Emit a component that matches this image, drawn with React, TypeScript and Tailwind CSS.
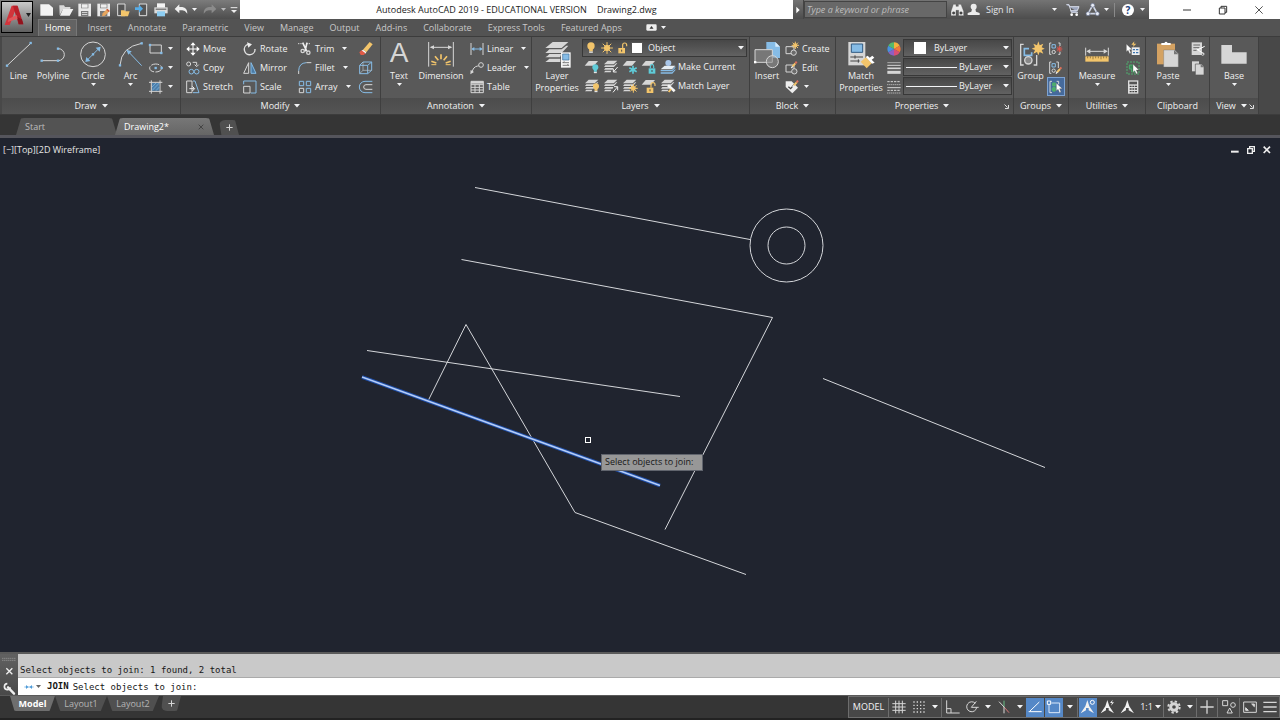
import { useState } from "react";
import type { ReactNode } from "react";

const BLUE = "#86bce6";
const LIGHT = "#d6d6d6";
const GOLD = "#f3c56b";
const TEAL = "#5fcbd8";
const GREEN = "#4fae6e";

/* icons are drawn on a grid of 3 units per pixel */
function Ico({ w = 16, h = 16, children }: { w?: number; h?: number; children: ReactNode }) {
  return (
    <svg
      width={w}
      height={h}
      viewBox={`0 0 ${w * 3} ${h * 3}`}
      fill="none"
      stroke={LIGHT}
      strokeWidth={3}
      className="block shrink-0"
      aria-hidden="true"
    >
      {children}
    </svg>
  );
}

function Caret({ small }: { small?: boolean }) {
  return small ? (
    <svg width="5" height="3" viewBox="0 0 5 3" className="block shrink-0 fill-gray-100" aria-hidden="true">
      <path d="M0 0h5L2.500 3z" />
    </svg>
  ) : (
    <svg width="6" height="4" viewBox="0 0 6 4" className="block shrink-0 fill-gray-100" aria-hidden="true">
      <path d="M0 0h6L3 3.600z" />
    </svg>
  );
}

/* small blue grip square */
function Grip({ x, y }: { x: number; y: number }) {
  return <rect x={x - 3.5} y={y - 3.5} width="7" height="7" fill={BLUE} stroke="none" />;
}

function Sheets() {
  return (
    <g stroke="none" fill={LIGHT}>
      <path d="M14 5h29l-11 11H3z" />
      <path d="M7 19h26l6-6h4L33 24H3zM7 27h24l-2 5H3zM7 35h18l-2 5H3z" />
    </g>
  );
}

function Sheet() {
  return <path d="M14 6h28L30 20H2z" fill={LIGHT} stroke="none" />;
}

const Sun = ({ x, y, r = 6 }: { x: number; y: number; r?: number }) => (
  <g stroke={GOLD} strokeWidth="3">
    <circle cx={x} cy={y} r={r} fill={GOLD} />
    <path
      d={`M${x} ${y - r * 2.2}v${r * 4.4}M${x - r * 2.2} ${y}h${r * 4.4}M${x - r * 1.6} ${y - r * 1.6}l${r * 3.2} ${r * 3.2}M${x + r * 1.6} ${y - r * 1.6}l${-r * 3.2} ${r * 3.2}`}
    />
  </g>
);

const Bulb = ({ x, y, c = GOLD, r = 9 }: { x: number; y: number; c?: string; r?: number }) => (
  <g stroke="none">
    <circle cx={x} cy={y} r={r} fill={c} />
    <path d={`M${x - r / 2} ${y + r / 2}h${r}v${r}h${-r}z`} fill={c} />
    <path d={`M${x - r / 2} ${y + r * 1.5}h${r}v4h${-r}z`} fill="#e6e6e6" />
  </g>
);

const Lock = ({ x, y, c = GOLD, open }: { x: number; y: number; c?: string; open?: boolean }) => (
  <g stroke={c}>
    <path
      d={open ? `M${x + 13} ${y}v-9q0-6 6-6t6 6v4` : `M${x + 5} ${y}v-6q0-6 5-6t5 6v6`}
      strokeWidth="3.500"
    />
    <rect x={x} y={y} width="20" height="16" fill={c} stroke="none" />
    <path d={`M${x + 10} ${y + 5}v6`} stroke="#4a4a4a" />
  </g>
);

const Pencil = ({ x, y }: { x: number; y: number }) => (
  <g strokeWidth="6">
    <path d={`M${x + 3} ${y + 15}l9-10`} stroke={GOLD} />
    <path d={`M${x + 12} ${y + 5}l4-5`} stroke="#e0705a" />
    <path d={`M${x} ${y + 19}l4-5`} stroke="#f2f2f2" strokeWidth="4" />
  </g>
);

const Cursor = ({ x, y }: { x: number; y: number }) => (
  <path d={`M${x} ${y}v24l5-5 5 10 4-2-4-10h8z`} fill="#fff" stroke="#444" strokeWidth="1" />
);

const Person = () => (
  <g fill="#ececec" stroke="none">
    <circle cx="23" cy="14" r="9" />
    <path d="M18 21h10l2 8 11 4v6H5v-6l11-4z" />
  </g>
);

interface BigButtonProps {
  label: string;
  icon: ReactNode;
  width: string;
  caret?: boolean;
}

function BigButton({ label, icon, width, caret }: BigButtonProps) {
  return (
    <button className={`flex shrink-0 flex-col items-center pt-1 hover:bg-white/10 ${width}`}>
      <span className="flex h-7 items-start justify-center">{icon}</span>
      <span className="mt-px text-center leading-3">{label}</span>
      {caret && (
        <span className="mt-px">
          <Caret small />
        </span>
      )}
    </button>
  );
}

interface RowButtonProps {
  label?: string;
  name?: string;
  icon: ReactNode;
  caret?: boolean;
  active?: boolean;
}

function RowButton({ label, name, icon, caret, active }: RowButtonProps) {
  return (
    <button
      aria-label={label ? undefined : name}
      className={`flex h-[19px] items-center gap-0.5 whitespace-nowrap ${
        active ? "bg-[#456a9c] outline outline-[#7ea3d2] -outline-offset-1" : "hover:bg-white/10"
      }`}
    >
      {icon}
      {label && <span>{label}</span>}
      {caret && (
        <span className={label ? "ml-1.5" : "ml-0.5"}>
          <Caret small />
        </span>
      )}
    </button>
  );
}

interface PanelProps {
  title: string;
  width: string;
  caret?: boolean;
  launcher?: boolean;
  children: ReactNode;
}

function Panel({ title, width, caret = true, launcher, children }: PanelProps) {
  return (
    <section
      aria-label={title}
      className={`flex shrink-0 flex-col border-r border-[#3f3f3f] shadow-[inset_-1px_0_0_#666] ${width}`}
    >
      <div className="flex h-[62px] bg-[#595959]">{children}</div>
      <div className="flex h-4 items-center bg-linear-to-b from-[#4c4c4c] to-[#545454] px-1">
        <button className="flex flex-1 items-center justify-center gap-[5px] leading-3">
          {title}
          {caret && <Caret />}
        </button>
        {launcher && (
          <button aria-label={`${title} settings`}>
            <svg width="5" height="5" viewBox="0 0 5 5" stroke="#ddd" fill="none" className="block">
              <path d="M0.500 0.500l3 3M4.500 1v3.500H1" />
            </svg>
          </button>
        )}
      </div>
    </section>
  );
}

function Rows({ className = "", children }: { className?: string; children: ReactNode }) {
  return <div className={`flex flex-col items-start pt-0.5 ${className}`}>{children}</div>;
}

function Combo({ name, value, lead }: { name: string; value: string; lead: ReactNode }) {
  return (
    <label className="flex h-[18px] w-full items-center border border-[#383838] bg-linear-to-b from-[#474747] to-[#626262] pr-0.5">
      {lead}
      <select
        aria-label={name}
        defaultValue={value}
        className="min-w-0 flex-1 cursor-pointer appearance-none bg-transparent leading-3 outline-none"
      >
        <option>{value}</option>
      </select>
      <Caret />
    </label>
  );
}

const tabs = [
  "Insert",
  "Annotate",
  "Parametric",
  "View",
  "Manage",
  "Output",
  "Add-ins",
  "Collaborate",
  "Express Tools",
  "Featured Apps",
];

const quickAccess = [
  {
    name: "New",
    icon: <path d="M4 7h26l12 10v24H4z" fill="#f4f4f4" stroke="none" />,
  },
  {
    name: "Open",
    icon: (
      <g stroke="none">
        <path d="M4 10h14l3 5h16v8H14L5 40z" fill="#d9d9d9" />
        <path d="M15 21h31L35 41H6z" fill="#f1f1f1" />
      </g>
    ),
  },
  {
    name: "Save",
    icon: (
      <g stroke="none">
        <path d="M4 5h38v38H4z" fill="#e9e9e9" />
        <path d="M12 5h22v14H12zM12 27h22v16H12z" fill="#777" />
        <path d="M14 7h18v10H14zM15 31h16v2H15zM15 37h16v2H15z" fill="#eee" />
      </g>
    ),
  },
  {
    name: "Save As",
    icon: (
      <g stroke="none">
        <path d="M4 5h38v38H4z" fill="#e9e9e9" />
        <path d="M12 5h22v14H12zM12 27h22v16H12z" fill="#777" />
        <path d="M14 7h18v10H14z" fill="#eee" />
        <path d="M18 43l2-9 14-14 7 7-14 14z" fill="#e6a55d" />
        <path d="M31 23l3-3 7 7-3 3z" fill="#c8563d" />
      </g>
    ),
  },
  {
    name: "Open from Web and Mobile",
    icon: (
      <g>
        <path d="M8 6h22v35H8z" fill="#555" stroke="#ddd" />
        <path d="M18 25h10l3 3h13l-5 15H18z" fill={GOLD} stroke="none" />
      </g>
    ),
  },
  {
    name: "Save to Web and Mobile",
    icon: (
      <g>
        <path d="M16 6h22v35H16z" fill="#555" stroke="#ddd" />
        <path d="M3 16h12V8l12 12-12 12v-8H3z" fill="#57ade8" stroke="none" />
      </g>
    ),
  },
  {
    name: "Plot",
    icon: (
      <g stroke="none">
        <path d="M12 4h24v13H12z" fill="#f4f4f4" />
        <path d="M4 16h40v18H4z" fill="#dcdcdc" />
        <path d="M12 28h24v15H12z" fill="#8dcdf2" />
        <path d="M8 20h32v3H8z" fill="#555" />
      </g>
    ),
  },
];

const modifyTools: { name: string; icon: ReactNode; caret?: boolean; bare?: boolean }[] = [
  {
    name: "Move",
    icon: (
      <g>
        <path d="M24 8v32M8 24h32" stroke="#fff" />
        <path d="M24 4l8 9H16zM24 44l8-9H16zM4 24l9-8v16zM44 24l-9-8v16z" fill="#fff" stroke="none" />
      </g>
    ),
  },
  {
    name: "Rotate",
    icon: (
      <g>
        <path d="M18 10a16 16 0 1 0 21 14" stroke="#e2e2e2" strokeWidth="4" />
        <path d="M15 4l15 6-11 10z" fill="#eee" stroke="none" />
      </g>
    ),
  },
  {
    name: "Trim",
    caret: true,
    icon: (
      <g>
        <path d="M3 8h13" strokeDasharray="4 3" />
        <path d="M28 8h14" strokeDasharray="4 3" />
        <path d="M17 5l12 25M30 5l-6 26" stroke="#eee" strokeWidth="5" />
        <circle cx="17" cy="30" r="5" strokeWidth="4" />
        <circle cx="34" cy="35" r="5" strokeWidth="4" />
      </g>
    ),
  },
  {
    name: "Erase",
    bare: true,
    icon: (
      <g stroke="none">
        <path d="M15 26L35 3l9 7-19 24z" fill={GOLD} />
        <path d="M15 26l10 8-4 5-11-9z" fill="#fff" />
        <path d="M4 34l6-6 13 9-6 5H8z" fill="#e05b47" />
      </g>
    ),
  },
  {
    name: "Copy",
    icon: (
      <g>
        <circle cx="11" cy="12" r="6" />
        <path d="M23 7h12v9M29 14l6 6 6-6" />
        <circle cx="19" cy="35" r="7" stroke={BLUE} />
        <circle cx="35" cy="35" r="7" stroke={BLUE} />
      </g>
    ),
  },
  {
    name: "Mirror",
    icon: (
      <g>
        <path d="M20 8v32H5z" />
        <path d="M27 8v32h15z" stroke={BLUE} fill="#4b7ba5" />
      </g>
    ),
  },
  {
    name: "Fillet",
    caret: true,
    icon: (
      <g>
        <path d="M28 8h15M5 32v10" />
        <path d="M5 32Q6 9 28 8" stroke={BLUE} />
      </g>
    ),
  },
  {
    name: "Explode",
    bare: true,
    icon: (
      <g>
        <path d="M5 16h24v25H5zM15 6h26v25L29 41M5 16L15 6M29 16l12-10" stroke={BLUE} />
        <path d="M15 6v25h26M5 41l10-10" stroke="#b9c5cf" strokeWidth="2" />
      </g>
    ),
  },
  {
    name: "Stretch",
    icon: (
      <g>
        <path d="M21 6H5v35h16z" />
        <path d="M24 6h6l12 35H24" stroke={BLUE} />
        <path d="M13 29h14M22 22l7 7-7 7" stroke="#eee" />
      </g>
    ),
  },
  {
    name: "Scale",
    icon: (
      <g>
        <path d="M5 16V6h37v36H26" stroke={BLUE} />
        <path d="M5 22h19v20H5z" />
      </g>
    ),
  },
  {
    name: "Array",
    caret: true,
    icon: (
      <g>
        <path d="M7 7h13v13H7zM28 7h13v13H28z" stroke={BLUE} />
        <path d="M7 28h13v13H7z" />
        <path d="M28 28h13v13H28z" stroke={BLUE} />
      </g>
    ),
  },
  {
    name: "Offset",
    bare: true,
    icon: (
      <g>
        <path d="M43 7H21a16.500 16.500 0 0 0 0 34h22" stroke={BLUE} />
        <path d="M43 17H24a7 7 0 0 0 0 14h19" />
      </g>
    ),
  },
];

const layerTools: { name: string; icon: ReactNode }[][] = [
  [
    { name: "Off", icon: <><Sheet /><Bulb x={34} y={25} c={TEAL} /></> },
    { name: "Isolate", icon: <><Sheets /><path d="M44 24L31 39M31 29v10h10" stroke="#eee" /></> },
    {
      name: "Freeze",
      icon: (
        <>
          <Sheet />
          <path d="M33 20v24M22 26l22 12M44 26L22 38" stroke={TEAL} strokeWidth="5" />
        </>
      ),
    },
    { name: "Lock", icon: <><Sheet /><Lock x={23} y={28} c={TEAL} /></> },
  ],
  [
    { name: "Turn All Layers On", icon: <><Sheets /><Bulb x={36} y={25} /></> },
    { name: "Unisolate", icon: <><Sheets /><path d="M30 43L43 27M33 26h11v11" stroke="#eee" /></> },
    { name: "Thaw All Layers", icon: <><Sheets /><Sun x={34} y={31} /></> },
    { name: "Unlock", icon: <><Sheet /><Lock x={17} y={29} open /></> },
  ],
];

/* segments of the model, in canvas pixels */
const polylines = [
  "475,49.500 750,101.500",
  "461.500,121.500 772.500,179.500 665,391.500",
  "428,263 466,186.500 575,374.500 746,436.500",
  "367,212.500 680,258.500",
  "823,240.500 1045,329.500",
];

const statusButton = "flex h-[19px] shrink-0 items-center justify-center";

function TitleBar() {
  return (
    <header className="flex h-[19px] bg-white text-[#222]">
      <div className="flex items-center bg-linear-to-b from-[#7c7c7c] to-[#4d4d4d] pl-[39px] pr-0.5">
        {quickAccess.map((q) => (
          <button key={q.name} aria-label={q.name} className="mr-[3px]">
            <Ico>{q.icon}</Ico>
          </button>
        ))}
        <button aria-label="Undo" className="ml-0.5">
          <Ico w={14}>
            <path d="M16 7v8h9q15 2 15 20-7-10-15-10h-9v9L2 21z" fill="#eee" stroke="none" />
          </Ico>
        </button>
        <button aria-label="Undo history" className="mx-1">
          <Caret small />
        </button>
        <button aria-label="Redo" className="ml-0.5">
          <Ico w={14}>
            <path d="M26 7v8h-9Q2 17 2 35q7-10 15-10h9v9l14-13z" fill="#8b8b8b" stroke="none" />
          </Ico>
        </button>
        <button aria-label="Redo history" className="mx-1 opacity-60">
          <Caret small />
        </button>
        <button aria-label="Customize Quick Access Toolbar">
          <Ico w={8} h={8}>
            <path d="M2 5h20" stroke="#eee" />
            <path d="M3 12h18l-9 9z" fill="#eee" stroke="none" />
          </Ico>
        </button>
      </div>
      <h1 className="flex flex-1 items-center justify-center gap-2.5 whitespace-nowrap text-[9px]">
        <span>Autodesk AutoCAD 2019 - EDUCATIONAL VERSION</span>
        <span>Drawing2.dwg</span>
      </h1>
      <div className="flex items-center bg-linear-to-b from-[#747474] to-[#4d4d4d] text-gray-200">
        <button aria-label="Collapse search" className="flex h-full w-[11px] items-center justify-center border-r border-[#444]">
          <Ico w={4} h={8}>
            <path d="M1 2l10 10L1 22z" fill="#fff" stroke="none" />
          </Ico>
        </button>
        <input
          aria-label="Search"
          placeholder="Type a keyword or phrase"
          className="h-[17px] w-[143px] border border-[#444] bg-[#686868] px-0.5 text-[9px] italic outline-none placeholder:text-[#bdbdbd]"
        />
        <button aria-label="Find" className="ml-0.5">
          <Ico w={17}>
            <g fill="#ececec" stroke="#444" strokeWidth="1">
              <path d="M13 7h8v6h7V7h8l8 21v13H29V25h-8v16H6V28z" />
              <circle cx="14" cy="33" r="4" fill="#444" />
              <circle cx="36" cy="33" r="4" fill="#444" />
            </g>
          </Ico>
        </button>
        <button className="flex items-center gap-1">
          <Ico>
            <Person />
          </Ico>
          Sign In
        </button>
        <button aria-label="Account menu" className="ml-[38px] mr-2">
          <Caret small />
        </button>
        <button aria-label="App Store">
          <Ico>
            <path d="M4 8h8l7 23h20M14 14h28l-5 12H17" stroke="#d7dcea" fill="#9da6bd" />
            <circle cx="20" cy="38" r="4" fill="#fff" stroke="none" />
            <circle cx="35" cy="38" r="4" fill="#fff" stroke="none" />
          </Ico>
        </button>
        <button aria-label="Stay Connected" className="ml-1 flex items-center gap-[3px]">
          <Ico>
            <path d="M23 10L9 35h28z" stroke="#cfd6e6" strokeWidth="5" />
            <g fill="#e8ecf5" stroke="#5f6987" strokeWidth="2">
              <circle cx="23" cy="10" r="6" />
              <circle cx="9" cy="35" r="6" />
              <circle cx="37" cy="35" r="6" />
            </g>
          </Ico>
          <Caret small />
        </button>
        <span className="mx-[5px] h-3.5 w-px bg-[#8a8a8a]" />
        <button aria-label="Help" className="mx-0.5 flex size-3 items-center justify-center rounded-full bg-white text-[10px] font-bold leading-3 text-[#22407a]">
          ?
        </button>
        <button aria-label="Help menu" className="mx-1">
          <Caret small />
        </button>
      </div>
      <div className="flex w-[131px] items-center justify-between pl-[33px] pr-4">
        <button aria-label="Minimize">
          <Ico w={10} h={10}>
            <path d="M3 15h24" stroke="#333" />
          </Ico>
        </button>
        <button aria-label="Restore">
          <Ico w={10} h={10}>
            <path d="M4 9h17v18H4zM9 9V4h17v18h-5" stroke="#333" />
          </Ico>
        </button>
        <button aria-label="Close">
          <Ico w={10} h={10}>
            <path d="M4 4l22 22M26 4L4 26" stroke="#333" strokeWidth="2.500" />
          </Ico>
        </button>
      </div>
    </header>
  );
}

function Ribbon() {
  return (
    <div className="flex h-[79px] overflow-hidden border-y border-[#3c3c3c] bg-[#484848] pl-0.5 text-[9px] text-[#f0f0f0]">
      <Panel title="Draw" width="w-[179px]">
        <BigButton
          label="Line"
          width="w-[33px]"
          icon={
            <Ico w={28} h={28}>
              <path d="M7 73L76 8" />
              <Grip x={6} y={74} />
              <Grip x={77} y={6} />
            </Ico>
          }
        />
        <BigButton
          label="Polyline"
          width="w-9"
          icon={
            <Ico w={28} h={28}>
              <path d="M8 59h50a18 18 0 0 0 0-36" />
              <Grip x={8} y={59} />
              <Grip x={57} y={59} />
              <Grip x={57} y={23} />
            </Ico>
          }
        />
        <BigButton
          label="Circle"
          width="w-11"
          caret
          icon={
            <Ico w={28} h={28}>
              <circle cx="42" cy="40" r="37" />
              <path d="M26 56l32-32" stroke={BLUE} />
              <Grip x={42} y={40} />
              <path d="M19 63l3-15 12 12zM65 17l-3 15-12-12z" fill={BLUE} stroke="none" />
            </Ico>
          }
        />
        <BigButton
          label="Arc"
          width="w-[31px]"
          caret
          icon={
            <Ico w={28} h={28}>
              <path d="M9 73Q12 18 74 7" />
              <path d="M36 34l38 40" stroke={BLUE} />
              <path d="M28 26l16 5-10 10z" fill={BLUE} stroke="none" />
              <Grip x={9} y={73} />
              <Grip x={74} y={7} />
            </Ico>
          }
        />
        <Rows className="pl-0.5">
          <RowButton
            name="Rectangle"
            caret
            icon={
              <Ico>
                <path d="M6 12h34v24H6z" />
                <Grip x={6} y={12} />
                <Grip x={40} y={36} />
              </Ico>
            }
          />
          <RowButton
            name="Ellipse"
            caret
            icon={
              <Ico>
                <ellipse cx="23" cy="24" rx="18" ry="12" strokeDasharray="24 4" />
                <Grip x={23} y={24} />
                <Grip x={41} y={24} />
              </Ico>
            }
          />
          <RowButton
            name="Hatch"
            caret
            icon={
              <Ico>
                <path d="M10 4v40M36 4v40M3 10h40M3 37h40" />
                <path d="M12 12h22v23H12z" fill="#4d7fab" stroke="none" />
                <path d="M12 24l12-12M12 35l22-23M24 35l10-11" stroke={BLUE} strokeWidth="2" />
              </Ico>
            }
          />
        </Rows>
      </Panel>

      <Panel title="Modify" width="w-[200px]">
        <div className="grid w-full auto-rows-[19px] grid-cols-[57px_55px_61px_18px] content-start pl-1 pt-0.5">
          {modifyTools.map((t) => (
            <RowButton
              key={t.name}
              name={t.name}
              label={t.bare ? undefined : t.name}
              caret={t.caret}
              icon={<Ico>{t.icon}</Ico>}
            />
          ))}
        </div>
      </Panel>

      <Panel title="Annotation" width="w-[151px]">
        <BigButton
          label="Text"
          width="w-9"
          caret
          icon={<span className="font-['Liberation_Sans',sans-serif] text-[28px] leading-6 text-[#d6d6d6]">A</span>}
        />
        <BigButton
          label="Dimension"
          width="w-12"
          icon={
            <Ico w={28} h={28}>
              <path d="M5 3v74M79 3v74M12 19h60" />
              <path d="M8 19l13-6v12zM76 19l-13-6v12z" fill={LIGHT} stroke="none" />
              <path d="M42 40v15M24 46l10 12M60 46L50 58M13 61l15 5M71 61l-15 5" stroke={GOLD} strokeWidth="5" />
              <path d="M13 71h15M56 71h15" stroke={GOLD} />
            </Ico>
          }
        />
        <Rows className="pl-1">
          <RowButton
            label="Linear"
            caret
            icon={
              <Ico>
                <path d="M6 6v36M42 6v36" />
                <path d="M10 24h28" stroke={BLUE} />
                <path d="M7 24l9-6v12zM41 24l-9-6v12z" fill={BLUE} stroke="none" />
              </Ico>
            }
          />
          <RowButton
            label="Leader"
            caret
            icon={
              <Ico>
                <path d="M9 38Q12 20 26 18h3" />
                <circle cx="36" cy="15" r="7" />
                <path d="M4 43l1-13 10 6z" fill={LIGHT} stroke="none" />
              </Ico>
            }
          />
          <RowButton
            label="Table"
            icon={
              <Ico>
                <path d="M6 7h37v34H6zM6 17h37M6 25h37M6 33h37M18 17v24M31 17v24" />
                <path d="M6 7h37v7H6z" fill={LIGHT} stroke="none" />
              </Ico>
            }
          />
        </Rows>
      </Panel>

      <Panel title="Layers" width="w-[218px]">
        <BigButton
          label="Layer Properties"
          width="w-[50px]"
          icon={
            <Ico w={28} h={28}>
              <g fill={LIGHT} stroke="none">
                <path d="M29 3h47L56 21H7z" />
                <path d="M14 30l5-5h37l14-11h6L56 36H7zM14 44l5-5h36l-4 10H7zM14 58l5-5h33v10H7z" />
              </g>
              <path d="M54 34h29v46H54z" fill="#f5f5f5" stroke="none" />
              <path d="M59 39h19v18H59z" fill={BLUE} stroke="#3e6c99" strokeWidth="2" />
              <path d="M59 65h19M64 61l-4 4M59 73h19M73 69l4 4" stroke="#444" strokeWidth="2" />
            </Ico>
          }
        />
        <div className="flex min-w-0 flex-1 flex-col pr-0.5 pt-0.5">
          <Combo
            name="Layer"
            value="Object"
            lead={
              <span className="mr-[5px] flex items-center">
                <Ico><Bulb x={24} y={18} r={11} /></Ico>
                <Ico><Sun x={24} y={24} r={8} /></Ico>
                <Ico><Lock x={10} y={24} open /></Ico>
                <span className="size-3 border border-[#555] bg-white" />
              </span>
            }
          />
          {layerTools.map((row, i) => (
            <div key={i} className="flex h-[19px] items-center pl-0.5">
              {row.map((t) => (
                <button key={t.name} aria-label={t.name} className="mr-[3px]">
                  <Ico>{t.icon}</Ico>
                </button>
              ))}
              <RowButton
                label={i === 0 ? "Make Current" : "Match Layer"}
                icon={
                  <Ico>
                    {i === 0 ? (
                      <g stroke="none">
                        <path d="M14 20h32L36 31H2z" fill="#e4ecf3" />
                        <circle cx="25" cy="12" r="9" fill="#a8c6ea" />
                        <path d="M2 33h34l10-11v4L37 37H2zM2 40h34l10-10v4L37 44H2z" fill={BLUE} />
                      </g>
                    ) : (
                      <g>
                        <Sheets />
                        <path d="M24 22l20 18" stroke="#f4f4f4" strokeWidth="8" />
                        <path d="M33 33l-7 9" stroke={GOLD} strokeWidth="6" />
                      </g>
                    )}
                  </Ico>
                }
              />
            </div>
          ))}
        </div>
      </Panel>

      <Panel title="Block" width="w-[86px]">
        <BigButton
          label="Insert"
          width="w-[34px]"
          icon={
            <Ico w={28} h={28}>
              <path d="M40 3h27l14 14v34H40z" fill={BLUE} stroke="none" />
              <path d="M67 3v14h14z" fill="#d8ecfb" stroke="none" />
              <path d="M6 26h52v38H6z" fill="#777" />
              <circle cx="58" cy="62" r="18" fill="#8d8d8d" fillOpacity="0.600" />
              <path d="M3 60h7v7H3z" fill="#fff" stroke="none" />
            </Ico>
          }
        />
        <Rows>
          <RowButton
            label="Create"
            icon={
              <Ico>
                <path d="M6 17h24v21H6z" />
                <circle cx="29" cy="35" r="8" fill="#6b6b6b" />
                <Sun x={34} y={13} r={5} />
              </Ico>
            }
          />
          <RowButton
            label="Edit"
            icon={
              <Ico>
                <path d="M6 15h24v21H6z" />
                <circle cx="31" cy="34" r="8" fill="#6b6b6b" />
                <Pencil x={22} y={5} />
              </Ico>
            }
          />
          <RowButton
            name="Edit Attributes"
            caret
            icon={
              <Ico>
                <path d="M5 7h18l19 19-17 17L5 24z" fill="#ededed" stroke="none" />
                <path d="M13 23l7 6 11-13" stroke="#444" strokeWidth="4" />
                <Pencil x={26} y={5} />
              </Ico>
            }
          />
        </Rows>
      </Panel>

      <Panel title="Properties" width="w-[178px]" launcher>
        <BigButton
          label="Match Properties"
          width="w-[50px]"
          icon={
            <Ico w={28} h={28}>
              <path d="M4 3h51v70H4z" fill={LIGHT} stroke="none" />
              <path d="M13 9h34v25H13z" fill={BLUE} stroke="#315b83" />
              <path d="M10 48h38M10 60h28M24 43v10M34 55v10" stroke="#444" />
              <path d="M41 62l16-13 17 18-15 15z" fill={GOLD} stroke="none" />
              <path d="M56 48l19 20 8-3-9-9 8-6-6-6-8 6-6-6z" fill="#fff" stroke="none" />
            </Ico>
          }
        />
        <div className="flex flex-col gap-[3px] pr-px pt-1">
          <Ico>
            <g stroke="none">
              <path d="M24 24V4a20 20 0 0 1 17 10z" fill="#f3b23c" />
              <path d="M24 24l17-10a20 20 0 0 1 0 20z" fill="#f0783c" />
              <path d="M24 24l17 10a20 20 0 0 1-17 10z" fill="#d94f74" />
              <path d="M24 24v20a20 20 0 0 1-17-10z" fill="#8e5fc4" />
              <path d="M24 24L7 34a20 20 0 0 1 0-20z" fill="#4692e0" />
              <path d="M24 24L7 14A20 20 0 0 1 24 4z" fill="#55b96b" />
            </g>
          </Ico>
          <Ico>
            <path d="M4 8h40" strokeWidth="2" />
            <path d="M4 16h40" />
            <path d="M4 25h40" strokeWidth="5" />
            <path d="M4 37h40" strokeWidth="9" />
          </Ico>
          <Ico>
            <path d="M4 8h40M4 34h40" strokeDasharray="7 3" />
            <path d="M4 17h40M4 42h40" strokeDasharray="3 3" />
            <path d="M4 26h40" />
          </Ico>
        </div>
        <div className="flex min-w-0 flex-1 flex-col gap-px pr-px pt-0.5">
          <Combo name="Object Color" value="ByLayer" lead={<span className="ml-2.5 mr-2 size-3 bg-white" />} />
          <Combo name="Lineweight" value="ByLayer" lead={<span className="mx-0.5 h-px w-[51px] bg-gray-100" />} />
          <Combo name="Linetype" value="ByLayer" lead={<span className="mx-0.5 h-px w-[51px] bg-gray-100" />} />
        </div>
      </Panel>

      <Panel title="Groups" width="w-[55px]">
        <BigButton
          label="Group"
          width="w-[33px]"
          icon={
            <Ico w={28} h={28}>
              <path d="M20 10h-9v62h9M50 72h9V42" strokeWidth="4" />
              <path d="M36 23H22v20h22v-9" stroke={BLUE} strokeWidth="5" />
              <circle cx="34" cy="58" r="11" fill="#888" strokeWidth="4" />
              <path d="M64 1l4 12 11-5-5 11 9 4-9 4 5 11-11-5-4 10-4-10-11 5 5-11-10-4 10-4-5-11 11 5z" fill={GOLD} stroke="none" />
            </Ico>
          }
        />
        <div className="flex flex-col pt-0.5">
          <RowButton
            name="Ungroup"
            icon={
              <Ico w={18}>
                <path d="M13 6H8v34h5M34 6h5v9M34 40h5v-8" />
                <path d="M15 11h10v10H15z" stroke={BLUE} />
                <circle cx="20" cy="33" r="5" />
                <path d="M30 17l14 14M44 17L30 31M29 24h17M37 15v18" stroke="#e0574e" />
              </Ico>
            }
          />
          <RowButton
            name="Group Edit"
            icon={
              <Ico w={18}>
                <path d="M13 6H8v34h5M28 6h6v18" />
                <path d="M15 11h10v10H15z" stroke={BLUE} />
                <circle cx="20" cy="32" r="5" />
                <Pencil x={27} y={22} />
              </Ico>
            }
          />
          <RowButton
            name="Group Selection On/Off"
            active
            icon={
              <Ico w={18}>
                <path d="M15 7H9v34h6M29 7h6v9" />
                <path d="M17 12h9v9h-9z" fill={GREEN} stroke={GREEN} />
                <circle cx="21" cy="31" r="6" fill={GREEN} stroke={GREEN} />
                <Cursor x={28} y={12} />
              </Ico>
            }
          />
        </div>
      </Panel>

      <Panel title="Utilities" width="w-[77px]">
        <BigButton
          label="Measure"
          width="w-14"
          caret
          icon={
            <Ico w={28} h={28}>
              <path d="M8 20v24M76 20v24M14 31h56" />
              <path d="M10 31l12-7v14zM74 31l-12-7v14z" fill={LIGHT} stroke="none" />
              <path d="M7 46h70v16H7z" fill={GOLD} stroke="none" />
              <path d="M14 46v6M22 46v6M30 46v9M38 46v6M46 46v6M54 46v9M62 46v6M70 46v6" stroke="#6d5527" strokeWidth="2" />
            </Ico>
          }
        />
        <Rows>
          <RowButton
            name="Quick Select"
            icon={
              <Ico>
                <path d="M20 19h24v23H20z" fill="#eee" stroke="none" />
                <path d="M24 26h6M24 35h6M33 26h7M33 35h7" stroke="#3b74b0" strokeWidth="4" />
                <path d="M28 1l-9 10h7l-3 8 11-11h-7z" fill={GOLD} stroke="none" />
                <Cursor x={4} y={9} />
              </Ico>
            }
          />
          <RowButton
            name="Select All"
            icon={
              <Ico>
                <path d="M6 6h36v36H6z" stroke={GREEN} strokeDasharray="6 3" />
                <path d="M13 15h14v8h7v13H20v-9h-7z" fill="#3c8a58" stroke={GREEN} />
                <Cursor x={24} y={13} />
              </Ico>
            }
          />
          <RowButton
            name="Quick Calculator"
            icon={
              <Ico>
                <path d="M9 4h31v40H9z" fill="#ddd" stroke="none" />
                <path d="M13 8h23v8H13z" fill="#555" stroke="none" />
                <path d="M14 22h22M14 30h22M14 38h22" stroke="#444" strokeWidth="4" strokeDasharray="6 2" />
              </Ico>
            }
          />
        </Rows>
      </Panel>

      <Panel title="Clipboard" width="w-16" caret={false}>
        <BigButton
          label="Paste"
          width="w-11"
          caret
          icon={
            <Ico w={28} h={28}>
              <path d="M9 8h54v62H9z" fill="#d4a262" stroke="none" />
              <path d="M22 12V6h9q5-8 10 0h9v6z" fill="#fff" stroke="none" />
              <path d="M29 27h33l11 11v40H29z" fill={LIGHT} stroke="#666" strokeWidth="1" />
              <path d="M60 27v13h13z" fill="#777" stroke="none" />
            </Ico>
          }
        />
        <Rows>
          <RowButton
            name="Cut"
            icon={
              <Ico>
                <path d="M5 4h31v38H5z" fill={LIGHT} stroke="none" />
                <path d="M10 12h20M10 20h18M10 28h12" stroke="#666" />
                <path d="M20 28l24-12M20 24l22 15" stroke="#fff" />
                <circle cx="38" cy="39" r="4" />
              </Ico>
            }
          />
          <RowButton
            name="Copy Clip"
            icon={
              <Ico>
                <path d="M6 4h21v30H6z" fill={LIGHT} stroke="none" />
                <path d="M16 12h18l8 8v25H16z" fill={LIGHT} stroke="#555" strokeWidth="2" />
                <path d="M32 12v10h10z" fill="#777" stroke="none" />
              </Ico>
            }
          />
        </Rows>
      </Panel>

      <Panel title="View" width="w-[49px]" launcher>
        <BigButton
          label="Base"
          width="w-full"
          caret
          icon={
            <Ico w={28} h={28}>
              <path d="M4 12h32v22h44v34H4z" fill={LIGHT} stroke="none" />
            </Ico>
          }
        />
      </Panel>
    </div>
  );
}

function StatusBar() {
  return (
    <footer className="flex h-6 items-start border-b-2 border-[#222] bg-[#353535] text-[9px] text-[#d8d8d8]">
      <nav className="flex items-start pl-2.5">
        <button className="h-[15px] w-[45px] rounded-b-md bg-[#6e6e6e] font-bold leading-[14px] text-white [clip-path:polygon(0_0,100%_0,88%_100%,10%_100%)]">
          Model
        </button>
        {["Layout1", "Layout2"].map((l) => (
          <button
            key={l}
            className="h-[15px] w-[52px] rounded-b-md bg-[#505050] leading-[14px] text-[#b5b5b5] [clip-path:polygon(0_0,100%_0,88%_100%,10%_100%)]"
          >
            {l}
          </button>
        ))}
        <button
          aria-label="New Layout"
          className="ml-0.5 flex h-[15px] w-5 items-center justify-center rounded-b-md bg-[#505050] [clip-path:polygon(10%_0,100%_0,80%_100%,0_100%)]"
        >
          <Ico w={7} h={7}>
            <path d="M10.500 1v19M1 10.500h19" />
          </Ico>
        </button>
      </nav>
      <div className="ml-auto flex h-[22px] items-center divide-x divide-[#6d6d6d] border border-[#6d6d6d] bg-[#474747]">
        <button className={`${statusButton} w-10 text-gray-100`}>MODEL</button>
        <div className="flex">
          <button aria-label="Grid" className={`${statusButton} w-5`}>
            <Ico>
              <path d="M14 5v38M24 5v38M34 5v38M4 14h40M4 24h40M4 34h40" />
            </Ico>
          </button>
          <button aria-label="Snap" className={`${statusButton} w-5`}>
            <Ico>
              <path d="M7 9h34M7 19h34M7 29h34M7 39h34" strokeWidth="4" strokeDasharray="4 6" />
            </Ico>
          </button>
          <button aria-label="Snap settings" className={`${statusButton} w-3`}>
            <Caret />
          </button>
        </div>
        <div className="flex">
          <button aria-label="Ortho" className={`${statusButton} w-[21px]`}>
            <Ico>
              <path d="M5 4v38h39M5 29h13v13" />
            </Ico>
          </button>
          <button aria-label="Polar Tracking" className={`${statusButton} w-[18px]`}>
            <Ico>
              <path d="M34 13a15 15 0 1 0 4 12M22 25L37 7M22 25h22" />
            </Ico>
          </button>
          <button aria-label="Polar settings" className={`${statusButton} w-3.5`}>
            <Caret />
          </button>
          <button aria-label="Isometric Drafting" className={`${statusButton} w-[18px]`}>
            <Ico>
              <path d="M24 24l15 17" stroke="#d87878" />
              <path d="M24 5v19" stroke="#68bd86" />
              <path d="M9 8l15 16v19" />
            </Ico>
          </button>
          <button aria-label="Isoplane settings" className={`${statusButton} w-[13px]`}>
            <Caret />
          </button>
          <button aria-label="Object Snap Tracking" aria-pressed="true" className={`${statusButton} w-[18px] bg-[#5588c7]`}>
            <Ico>
              <path d="M5 38h39M8 37L37 9" stroke="#fff" />
            </Ico>
          </button>
          <button aria-label="Object Snap" aria-pressed="true" className={`${statusButton} ml-px w-[18px] bg-[#5588c7]`}>
            <Ico>
              <path d="M9 12v29h32V12H16" stroke="#dce9fa" />
              <path d="M4 6h10v10H4z" fill="#5588c7" stroke="#fff" />
            </Ico>
          </button>
          <button aria-label="Object Snap settings" className={`${statusButton} w-3.5`}>
            <Caret />
          </button>
        </div>
        <div className="flex">
          {["Annotation Visibility", "Auto Scale", "Annotation Scale"].map((name, i) => (
            <button
              key={name}
              aria-label={name}
              className={`${statusButton} ${i === 0 ? "mx-px w-[18px] bg-[#5588c7]" : "w-5"}`}
            >
              <Ico>
                <path d="M22 3l6 19 14 21-16-9v-7h-8v7L2 43l14-21z" fill="#f0f0f0" stroke="none" />
                {i === 0 && <circle cx="37" cy="10" r="6" stroke="#fff" />}
                {i === 1 && <path d="M38 2l-8 10h6l-3 8 9-10h-6z" fill="#f0f0f0" stroke="none" />}
              </Ico>
            </button>
          ))}
          <button className={`${statusButton} w-[25px] gap-0.5 text-gray-100`}>
            1:1
            <Caret />
          </button>
        </div>
        <div className="flex">
          <button aria-label="Workspace Switching" className={`${statusButton} w-5`}>
            <Ico>
              <circle cx="24" cy="24" r="10" strokeWidth="9" />
              <circle cx="24" cy="24" r="17" strokeWidth="6" strokeDasharray="7 6.350" />
            </Ico>
          </button>
          <button aria-label="Workspace menu" className={`${statusButton} w-3`}>
            <Caret />
          </button>
        </div>
        <button aria-label="Annotation Monitor" className={`${statusButton} w-[21px]`}>
          <Ico>
            <path d="M24 4v40M4 24h40" strokeWidth="4" />
          </Ico>
        </button>
        <button aria-label="Isolate Objects" className={`${statusButton} w-[22px]`}>
          <Ico>
            <path d="M5 5h15v15H5zM18 42l8-15 8 15z" />
            <circle cx="36" cy="18" r="7" />
          </Ico>
        </button>
        <div className="flex">
          <button aria-label="Clean Screen" className={`${statusButton} w-5`}>
            <Ico>
              <path d="M5 9h38v31H5z" />
              <path d="M29 15h8v8zM11 26v8h8z" fill={LIGHT} />
            </Ico>
          </button>
          <button aria-label="Customization" className={`${statusButton} w-[19px]`}>
            <Ico>
              <path d="M4 10h40M4 24h40M4 38h40" strokeWidth="4" />
            </Ico>
          </button>
        </div>
      </div>
    </footer>
  );
}

export default function App() {
  const [command, setCommand] = useState("Select objects to join:");

  return (
    <div className="flex min-h-screen flex-col overflow-hidden bg-[#353535] font-['Open_Sans','Noto_Sans',sans-serif] text-[9px]">
      <div className="relative">
        <TitleBar />
        <nav className="flex h-[17px] items-center bg-[#535353] pl-[38px] text-[#c9c9c9]">
          <button className="h-full border border-b-0 border-[#777] bg-[#636363] px-1.5 text-white">Home</button>
          <span className="w-0.5" />
          {tabs.map((t) => (
            <button key={t} className="h-full whitespace-nowrap px-2">
              {t}
            </button>
          ))}
          <button aria-label="Minimize ribbon" className="ml-4">
            <Ico w={11} h={7}>
              <path d="M4 1h25q3 0 3 4v11q0 4-3 4H4q-3 0-3-4V5q0-4 3-4z" fill="#eee" stroke="none" />
              <path d="M16.500 6l6 8h-12z" fill="#333" stroke="none" />
            </Ico>
          </button>
          <button aria-label="Ribbon display options" className="ml-1">
            <Caret small />
          </button>
        </nav>
        <button
          aria-label="Application menu"
          className="absolute left-px top-px flex h-8 w-8 items-center border border-black bg-linear-to-b from-[#c9c9c9] to-[#5f5f5f] pb-1 pl-px"
        >
          <Ico w={23} h={24}>
            <g stroke="none">
              <path d="M26 8h16L20 66H5z" fill="#d3343b" />
              <path d="M30 8h14l17 56H47L35 26z" fill="#b81f29" />
              <path d="M17 47l24-11 4 11-31 10z" fill="#e2575b" />
              <path d="M43 42l14 7 4 15H47z" fill="#93131d" />
            </g>
          </Ico>
          <svg width="5" height="4" viewBox="0 0 5 4" className="fill-[#222]" aria-hidden="true">
            <path d="M0 0h5L2.500 4z" />
          </svg>
        </button>
      </div>

      <Ribbon />

      <nav className="flex h-[23px] items-end border-b-[3px] border-[#55555c] bg-[#353535] pl-4 text-[#bdbdbd]">
        <button className="h-[17px] w-[101px] rounded-t-lg bg-[#535353] pl-[9px] text-left [clip-path:polygon(0_100%,5%_0,95%_0,100%_100%)]">
          Start
        </button>
        <div className="-ml-0.5 flex h-[17px] w-[99px] items-center rounded-t-lg bg-linear-to-b from-[#777] to-[#666] pl-[9px] pr-2.5 text-white [clip-path:polygon(0_100%,5%_0,95%_0,100%_100%)]">
          <button className="flex-1 text-left">Drawing2*</button>
          <button aria-label="Close Drawing2">
            <Ico w={6} h={6}>
              <path d="M2 2l14 14M16 2L2 16" stroke="#444" />
            </Ico>
          </button>
        </div>
        <button
          aria-label="New tab"
          className="ml-[5px] flex h-[15px] w-5 items-center justify-center rounded-t-md bg-[#505050] [clip-path:polygon(0_0,80%_0,100%_100%,12%_100%)]"
        >
          <Ico w={7} h={7}>
            <path d="M10.500 1v19M1 10.500h19" />
          </Ico>
        </button>
      </nav>

      <main className="relative flex min-h-[480px] flex-1 flex-col bg-[#20242f]">
        <svg className="absolute inset-0 h-full w-full" fill="none" stroke="#d4d6da" strokeWidth="1">
          {polylines.map((p) => (
            <polyline key={p} points={p} />
          ))}
          <circle cx="786.500" cy="107.500" r="36.500" />
          <circle cx="786.500" cy="107.500" r="18.500" />
          <g>
            <path d="M362 239l298 108.500" stroke="#1f4ea8" strokeWidth="3.500" />
            <path d="M362 239l298 108.500" stroke="#b4cdf8" strokeWidth="1.500" />
          </g>
          <rect x="585.500" y="299.500" width="5" height="5" stroke="#fff" />
        </svg>
        <div className="relative flex justify-between px-[3px] pt-1 text-[#e6e6e6]">
          <div className="flex leading-[15px]">
            <button>[−]</button>
            <button>[Top]</button>
            <button>[2D Wireframe]</button>
          </div>
          <div className="flex items-center gap-1.5 pr-[5px]">
            <button aria-label="Minimize drawing">
              <Ico w={10} h={10}>
                <path d="M3 20h23" stroke="#eee" strokeWidth="6" />
              </Ico>
            </button>
            <button aria-label="Restore drawing">
              <Ico w={10} h={10}>
                <path d="M5 11h14v14H5zM11 9V5h14v14h-4" stroke="#eee" strokeWidth="4" />
              </Ico>
            </button>
            <button aria-label="Close drawing">
              <Ico w={10} h={10}>
                <path d="M5 5l19 19M24 5L5 24" stroke="#eee" strokeWidth="5" />
              </Ico>
            </button>
          </div>
        </div>
        <div
          role="tooltip"
          className="absolute left-[601px] top-[316px] h-[17px] w-[102px] whitespace-nowrap border border-[#60646d] bg-[#979797] px-[3px] leading-[14px] text-[#171717]"
        >
          Select objects to join:
        </div>
      </main>

      <section aria-label="Command line" className="flex border-b border-t-2 border-[#5a5a5a] font-['DejaVu_Sans_Mono',monospace] text-[9px] text-[#171717]">
        <div className="flex w-[18px] flex-col items-center bg-linear-to-b from-[#616161] to-[#494949] pt-[3px]">
          <Ico w={14} h={5}>
            <path d="M1 4h40M1 10h40" strokeDasharray="3 3" stroke="#aaa" strokeWidth="2.500" />
          </Ico>
          <button aria-label="Close command line" className="mt-[5px]">
            <Ico w={9} h={9}>
              <path d="M4 4l18 18M22 4L4 22" stroke="#eee" strokeWidth="4" />
            </Ico>
          </button>
          <button aria-label="Customize" className="mt-1.5">
            <Ico w={13} h={13}>
              <path d="M15 16l18 19" stroke="#eee" strokeWidth="7" strokeLinecap="round" />
              <path d="M13 5a9 9 0 1 0 9 11" stroke="#eee" strokeWidth="5" />
            </Ico>
          </button>
        </div>
        <div className="flex flex-1 flex-col">
          <p className="flex h-6 items-end border-b border-[#aaa] bg-[#c9c9c9] pl-0.5">
            Select objects to join: 1 found, 2 total
          </p>
          <label className="flex h-[17px] items-center bg-white pl-1.5">
            <Ico w={10} h={8}>
              <path d="M1 12h28" stroke={BLUE} />
              <path d="M6 6l7 6-7 6zM24 6l-7 6 7 6z" fill="#4d9ad8" stroke="none" />
            </Ico>
            <svg width="5" height="3" viewBox="0 0 5 3" className="ml-0.5 fill-[#666]" aria-hidden="true">
              <path d="M0 0h5L2.500 3z" />
            </svg>
            <span className="ml-1.5 font-bold">JOIN</span>
            <input
              aria-label="Command input"
              value={command}
              onChange={(e) => setCommand(e.target.value)}
              className="ml-1 h-[17px] flex-1 bg-transparent outline-none"
            />
          </label>
        </div>
      </section>

      <StatusBar />
    </div>
  );
}
